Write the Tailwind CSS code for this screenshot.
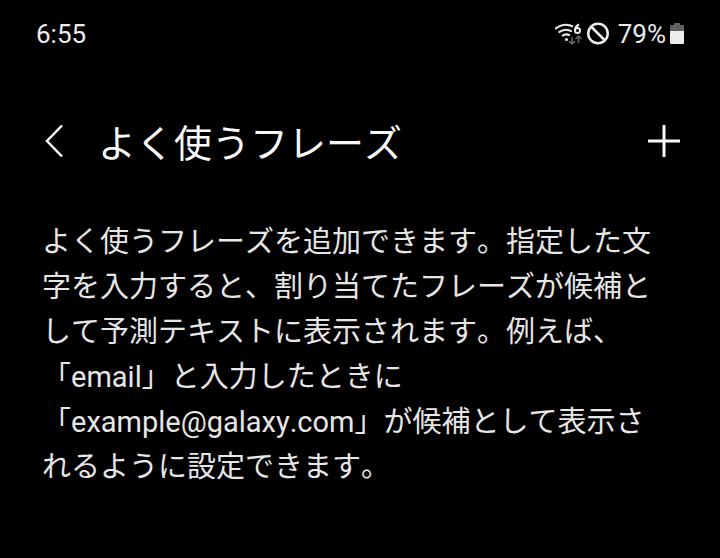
<!DOCTYPE html>
<html lang="ja">
<head>
  <meta charset="UTF-8" />
  <meta name="viewport" content="width=device-width, initial-scale=1.0" />
  <title>よく使うフレーズ</title>
  <script src="https://cdn.jsdelivr.net/npm/@tailwindcss/browser@4"></script>
</head>
<body class="min-h-screen bg-black text-[#f8f8f8] font-[Roboto,'Noto_Sans_CJK_JP',sans-serif] [font-kerning:none]">

  <!-- Status bar -->
  <div class="flex items-center justify-between h-17 pl-9 pr-[35px] text-[26px] leading-none text-[#ececec]">
    <span>6:55</span>
    <div class="flex items-center gap-[3px]">
      <svg class="w-7 h-6" viewBox="0 0 28 24" fill="none" stroke="currentColor" stroke-width="2">
        <path d="M0 7Q9 0 18 4.500M3.500 10.500Q10 5.500 17 9.500M7 14Q11 11 15 13.500" />
        <circle cx="11.500" cy="17.500" r="1.500" fill="currentColor" stroke="none" />
        <circle cx="22.500" cy="8.500" r="2.500" />
        <path d="M24 2.500Q20 4.500 20 8.500" />
        <path d="M17 15v7m-3-3 3 3 3-3M23.500 21v-7m-3 3 3-3 3 3" stroke="#686868" stroke-width="1.500" />
      </svg>
      <svg class="w-6 h-6" viewBox="0 0 24 24" fill="none" stroke="currentColor" stroke-width="2.500">
        <circle cx="12" cy="11.500" r="9.750" />
        <path d="M5 4.500l14 14" />
      </svg>
      <span class="ml-[5px]">79%</span>
      <svg class="w-4 h-6" viewBox="0 0 16 24" fill="currentColor">
        <path d="M5 1h6v2h3q1 0 1 1v5H1V4q0-1 1-1h3z" fill="#606060" />
        <path d="M1 9h14v12q0 1-1 1H2q-1 0-1-1z" />
      </svg>
    </div>
  </div>

  <!-- App bar -->
  <header class="flex items-center h-37 pl-9 pr-9">
    <button type="button" aria-label="戻る" class="mr-[22px]">
      <svg class="w-10 h-10" viewBox="0 0 40 40" fill="none" stroke="currentColor" stroke-width="2.500">
        <path d="M26 3.500L11 19l15 15.500" />
      </svg>
    </button>
    <h1 class="flex-1 pt-1 text-[38px] leading-none">よく使うフレーズ</h1>
    <button type="button" aria-label="追加">
      <svg class="w-10 h-10" viewBox="0 0 40 40" fill="none" stroke="currentColor" stroke-width="3">
        <path d="M20 3v32M4 19h32" />
      </svg>
    </button>
  </header>

  <main class="pt-1 pl-[42px] pr-14">
    <p class="text-[29px] leading-[45px] text-[#e6e6e6]">よく使うフレーズを追加できます。指定した文字を入力すると、割り当てたフレーズが候補として予測テキストに表示されます。例えば、「email」と入力したときに「example@galaxy.com」が候補として表示されるように設定できます。</p>
  </main>

</body>
</html>
